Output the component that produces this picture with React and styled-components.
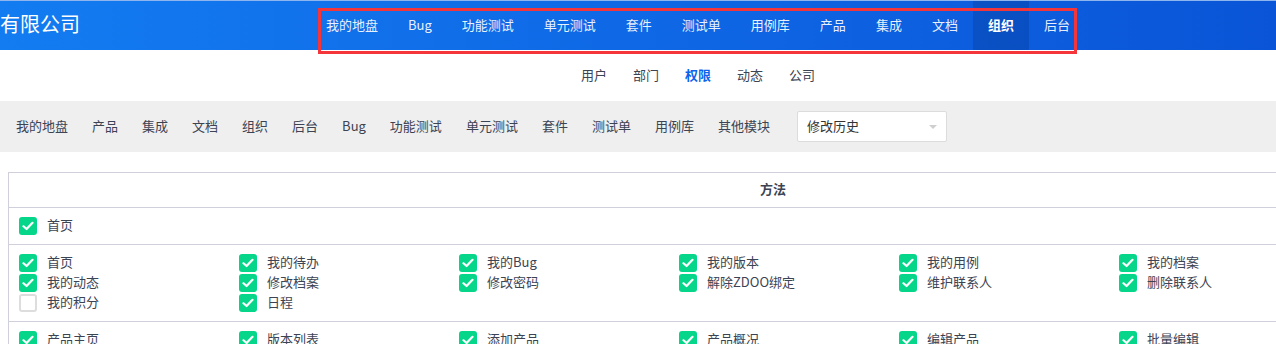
import React from "react";
import styled, { createGlobalStyle } from "styled-components";

const Global = createGlobalStyle`
  html, body {
    margin: 0;
    padding: 0;
    overflow: hidden;
    background: #fff;
  }
  body {
    font-family: "Noto Sans CJK SC", "Liberation Sans", sans-serif;
    font-size: 13px;
    color: #3c4353;
  }
`;

const Page = styled.div`
  position: relative;
  width: 1276px;
  height: 344px;
  overflow: hidden;
`;

const Header = styled.div`
  display: flex;
  align-items: stretch;
  height: 50px;
  background: linear-gradient(90deg, #137cf1 0%, #0e64e3 60%, #0a55d7 100%);
  border-top: 1px solid #8fb5ee;
  box-sizing: border-box;
`;

const Logo = styled.div`
  width: 311px;
  font-size: 20px;
  line-height: 46px;
  color: #fff;
  white-space: nowrap;
`;

const MainNav = styled.div`
  display: flex;
`;

const NavItem = styled.div`
  padding: 0 15px;
  line-height: 47px;
  color: ${p => (p.active ? "#fff" : "rgba(255,255,255,.92)")};
  font-weight: ${p => (p.active ? 700 : 400)};
  background: ${p => (p.active ? "rgba(0,20,80,.18)" : "transparent")};
`;

const Marker = styled.div`
  position: absolute;
  left: 318px;
  top: 8px;
  width: 759px;
  height: 46px;
  border: 3px solid #f4353a;
  box-sizing: border-box;
  pointer-events: none;
`;

const SubNav = styled.div`
  display: flex;
  height: 50px;
  align-items: center;
  padding-left: 568px;
`;

const SubItem = styled.div`
  padding: 0 13px 1px;
  color: ${p => (p.active ? "#0c64eb" : "#3c4353")};
  font-weight: ${p => (p.active ? 700 : 400)};
`;

const ModuleBar = styled.div`
  display: flex;
  align-items: center;
  margin-top: 1px;
  height: 51px;
  padding-left: 4px;
  background: #efefef;
`;

const ModuleItem = styled.div`
  padding: 0 12px 2px;
  color: #3c4353;
`;

const Select = styled.div`
  position: relative;
  margin-left: 15px;
  width: 150px;
  height: 31px;
  box-sizing: border-box;
  border: 1px solid #dcdcdc;
  border-radius: 2px;
  background: #fff;
  padding-left: 9px;
  line-height: 27px;
  color: #333;
`;

const Caret = styled.span`
  position: absolute;
  right: 9px;
  top: 13px;
  width: 0;
  height: 0;
  border-left: 4px solid transparent;
  border-right: 4px solid transparent;
  border-top: 4px solid #cfcfcf;
`;

const Table = styled.div`
  margin: 20px 0 0 8px;
  width: 1528px;
  border-top: 1px solid #cfd0dc;
  border-left: 1px solid #cfd0dc;
`;

const HeadRow = styled.div`
  height: 34px;
  line-height: 32px;
  text-align: center;
  font-weight: 700;
  color: #3c4353;
  border-bottom: 1px solid #cfd0dc;
`;

const Row = styled.div`
  display: grid;
  grid-template-columns: repeat(6, 220px);
  padding: 8px 0 8px 10px;
  border-bottom: 1px solid #cfd0dc;
`;

const Item = styled.label`
  display: flex;
  align-items: center;
  height: 20px;
  white-space: nowrap;
`;

const Label = styled.span`
  padding-bottom: 3px;
`;

const Box = styled.span`
  display: inline-flex;
  align-items: center;
  justify-content: center;
  width: 18px;
  height: 18px;
  box-sizing: border-box;
  border-radius: 3px;
  margin-right: 10px;
  background: ${p => (p.checked ? "#06d68a" : "#fff")};
  border: ${p => (p.checked ? "none" : "2px solid #dddddd")};
`;

const Check = ({ checked = true, children }) => (
  <Item>
    <Box checked={checked}>
      {checked && (
        <svg width="12" height="10" viewBox="0 0 12 10">
          <path d="M1.5 5.2 L4.6 8 L10.5 1.8" fill="none" stroke="#fff" strokeWidth="2.2" strokeLinecap="round" strokeLinejoin="round" />
        </svg>
      )}
    </Box>
    <Label>{children}</Label>
  </Item>
);

const mainNav = ["我的地盘", "Bug", "功能测试", "单元测试", "套件", "测试单", "用例库", "产品", "集成", "文档", "组织", "后台"];
const subNav = ["用户", "部门", "权限", "动态", "公司"];
const modules = ["我的地盘", "产品", "集成", "文档", "组织", "后台", "Bug", "功能测试", "单元测试", "套件", "测试单", "用例库", "其他模块"];

const myItems = [
  ["首页", true], ["我的待办", true], ["我的Bug", true], ["我的版本", true], ["我的用例", true], ["我的档案", true],
  ["我的动态", true], ["修改档案", true], ["修改密码", true], ["解除ZDOO绑定", true], ["维护联系人", true], ["删除联系人", true],
  ["我的积分", false], ["日程", true],
];
const productItems = ["产品主页", "版本列表", "添加产品", "产品概况", "编辑产品", "批量编辑"];

export default function App() {
  return (
    <Page>
      <Global />
      <Header>
        <Logo>有限公司</Logo>
        <MainNav>
          {mainNav.map(n => (
            <NavItem key={n} active={n === "组织"}>{n}</NavItem>
          ))}
        </MainNav>
      </Header>
      <Marker />
      <SubNav>
        {subNav.map(n => (
          <SubItem key={n} active={n === "权限"}>{n}</SubItem>
        ))}
      </SubNav>
      <ModuleBar>
        {modules.map(m => (
          <ModuleItem key={m}>{m}</ModuleItem>
        ))}
        <Select>
          修改历史
          <Caret />
        </Select>
      </ModuleBar>
      <Table>
        <HeadRow>方法</HeadRow>
        <Row>
          <Check>首页</Check>
        </Row>
        <Row>
          {myItems.map(([t, c]) => (
            <Check key={t} checked={c}>{t}</Check>
          ))}
        </Row>
        <Row>
          {productItems.map(t => (
            <Check key={t}>{t}</Check>
          ))}
        </Row>
      </Table>
    </Page>
  );
}
